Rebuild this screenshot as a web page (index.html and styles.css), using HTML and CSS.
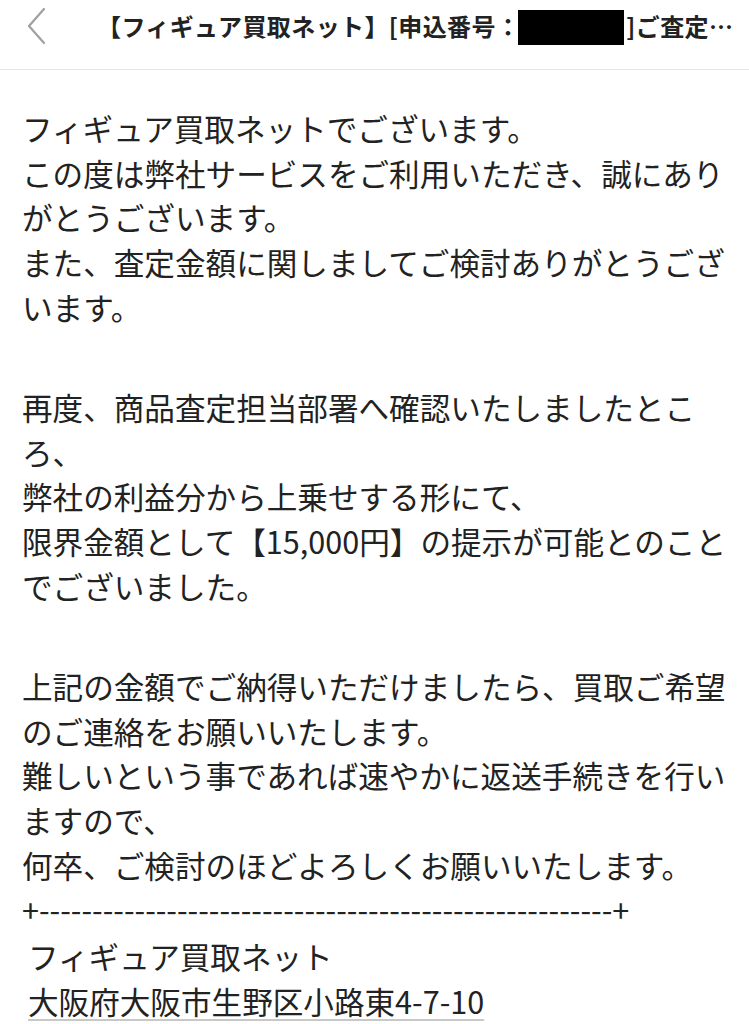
FILE: index.html
```html
<!DOCTYPE html>
<html lang="ja">
<head>
  <meta charset="UTF-8" />
  <title>メール</title>
  <link rel="stylesheet" href="styles.css">
</head>
<body>

  <!-- 上部ヘッダー -->
  <div class="header">
    <a class="back" href="#">
      <svg width="22" height="40" viewBox="0 0 22 40">
        <polyline points="19,2 4,19 19,36" fill="none" stroke="#a0a0a0" stroke-width="2.2" stroke-linecap="round" stroke-linejoin="round" />
      </svg>
    </a>
    <div class="subject">【フィギュア買取ネット】[申込番号：<span class="masked"></span>]ご査定…</div>
  </div>

  <!-- 本文 -->
  <div class="mail-body">
    <p>フィギュア買取ネットでございます。<br>この度は弊社サービスをご利用いただき、誠にありがとうございます。<br>また、査定金額に関しましてご検討ありがとうございます。</p>

    <p>再度、商品査定担当部署へ確認いたしましたところ、<br>弊社の利益分から上乗せする形にて、<br>限界金額として【15,000円】の提示が可能とのことでございました。</p>

    <p>上記の金額でご納得いただけましたら、買取ご希望のご連絡をお願いいたします。<br>難しいという事であれば速やかに返送手続きを行いますので、<br>何卒、ご検討のほどよろしくお願いいたします。</p>

    <div class="rule">+------------------------------------------------------+</div>
    <div class="signature">
      <div>フィギュア買取ネット</div>
      <a class="address" href="#">大阪府大阪市生野区小路東4-7-10</a>
    </div>
  </div>

</body>
</html>
```

FILE: styles.css
```css
* {
  box-sizing: border-box;
}
body {
  margin: 0;
  padding: 0;
  background-color: #ffffff;
  color: #222;
  font-family: "Noto Sans CJK JP", "Noto Sans", sans-serif;
}
.header {
  display: flex;
  align-items: flex-start;
  height: 70px;
  padding-top: 6px;
  border-bottom: 1px solid #e6e6e6;
}
.back {
  display: flex;
  width: 97px;
  padding-top: 1px;
  padding-left: 25px;
}
.subject {
  flex: 1;
  min-width: 0;
  font-size: 24px;
  line-height: 40px;
  font-weight: bold;
  letter-spacing: 0.4px;
  color: #222;
  white-space: nowrap;
}
.masked {
  display: inline-block;
  width: 106px;
  height: 35px;
  margin: -4px 2px 0 -2px;
  background-color: #000;
  vertical-align: middle;
}
.mail-body {
  padding: 36px 17px 0 22px;
  font-size: 30.6px;
  line-height: 44.7px;
}
.mail-body p {
  margin: 0 0 55.4px;
}
.mail-body p:last-of-type {
  margin-bottom: 0;
}
.rule {
  white-space: nowrap;
}
.signature {
  padding-top: 2px;
  padding-left: 6px;
}
.address {
  color: inherit;
  text-decoration: underline;
  text-decoration-color: #c8c8c8;
  text-decoration-thickness: 2px;
  text-underline-offset: 5px;
}
```
